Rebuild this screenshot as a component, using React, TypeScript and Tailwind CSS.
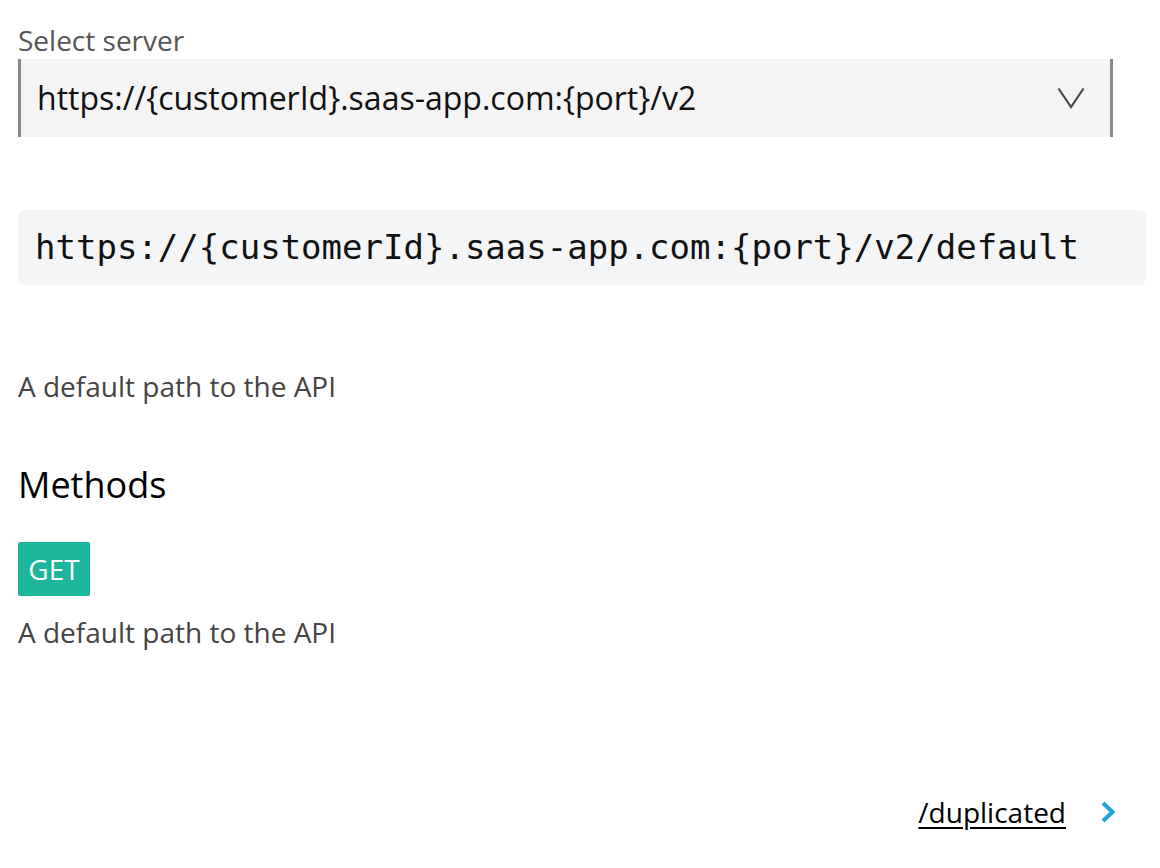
const sans = { fontFamily: '"Open Sans", "Noto Sans", sans-serif' };
const mono = { fontFamily: '"DejaVu Sans Mono", "Liberation Mono", monospace' };

function SelectChevron() {
  return (
    <svg width="28" height="22" viewBox="0 0 28 22" fill="none">
      <polyline points="1.5,1.5 14,20 26.5,1.5" stroke="#4a4a4a" strokeWidth="2.2" />
    </svg>
  );
}

function LinkChevron() {
  return (
    <svg width="16" height="24" viewBox="0 0 16 24" fill="none">
      <polyline points="3,3 12.5,12 3,21" stroke="#1ea2dc" strokeWidth="4" />
    </svg>
  );
}

export default function App() {
  return (
    <div
      className="w-[1160px] h-[868px] bg-white px-[18px] pt-[22px] overflow-hidden"
      style={sans}
    >
      <div className="text-[28px] leading-[36px] text-[#555]">Select server</div>
      <div className="mt-[1px] flex h-[78px] w-[1095px] items-center justify-between border-x-[3px] border-[#8a8a8a] bg-[#f4f4f4] pl-[16px] pr-[25px]">
        <span className="text-[32px] text-[#111]">
          https://{"{customerId}"}.saas-app.com:{"{port}"}/v2
        </span>
        <SelectChevron />
      </div>

      <div className="mt-[73px] flex h-[75px] w-[1128px] items-center rounded-[6px] bg-[#f4f5f7] px-[17px]">
        <code className="text-[34px] text-[#111]" style={mono}>
          https://{"{customerId}"}.saas-app.com:{"{port}"}/v2/default
        </code>
      </div>

      <p className="mt-[83px] text-[28px] leading-[36px] text-[#444]">
        A default path to the API
      </p>

      <h2 className="mt-[59px] text-[36px] leading-[44px] text-black">Methods</h2>

      <div className="mt-[35px] flex h-[54px] w-[72px] items-center justify-center rounded-[2px] bg-[#1db59c] text-[28px] text-white">
        GET
      </div>

      <p className="mt-[18px] text-[28px] leading-[36px] text-[#444]">
        A default path to the API
      </p>

      <div className="mt-[144px] flex items-center justify-end pr-[26px]">
        <a className="text-[28px] leading-[36px] text-black underline underline-offset-[4px] decoration-[2px]">
          /duplicated
        </a>
        <span className="ml-[34px] flex">
          <LinkChevron />
        </span>
      </div>
    </div>
  );
}
